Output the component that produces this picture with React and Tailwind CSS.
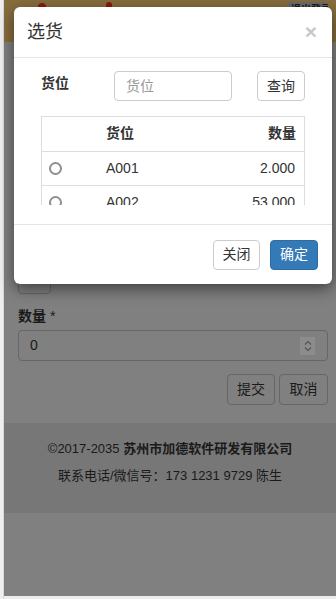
const font = { fontFamily: '"Liberation Sans", "Noto Sans CJK SC", sans-serif' }

const Radio = () => (
  <span className="block w-[13px] h-[13px] rounded-full border-2 border-[#8f8f8f] bg-white"></span>
)

const rows = [
  { loc: 'A001', qty: '2.000' },
  { loc: 'A002', qty: '53.000' },
  { loc: 'A003', qty: '8.000' },
]

const App = () => {
  return (
    <div className="relative w-[336px] h-[599px] overflow-hidden flex bg-[#ededed] text-[14px] text-[#333]" style={font}>
      {/* 左侧窗口边 */}
      <div className="w-[4px] shrink-0 bg-[#eeeeee] border-r border-[#d8d8d8]"></div>

      <div className="flex-1 flex flex-col">
        <div className="flex-1 flex flex-col bg-[#808080]">
          {/* 顶部栏 */}
          <div className="h-[42px] bg-[#876d3e] flex items-start relative">
            <span className="ml-[34px] mt-[3px] w-[8px] h-[6px] bg-[#8a1a10] rounded-t-full"></span>
            <span className="ml-[60px] mt-[2px] w-[6px] h-[7px] bg-[#8a1a10] rounded-t-full"></span>
            <span className="ml-auto mr-[8px] mt-[2px] h-[16px] w-[41px] overflow-hidden pl-[4px] rounded-[4px] bg-[#6c6c6c] text-[10px] leading-[16px] font-bold text-[#1a1a1a] whitespace-nowrap">退出登录</span>
          </div>

          <div className="pl-[14px] pr-[8px]">
            <div className="mt-[218px] w-[33px] h-[34px] rounded-[4px] border border-[#666]"></div>

            <div className="mt-[12px] font-bold leading-[20px] text-[#1a1a1a]">
              数量 <span className="font-normal">*</span>
            </div>
            <div className="mt-[4px] h-[31px] rounded-[4px] border border-[#666] flex items-center pl-[11px] pr-[12px] text-[#1a1a1a]">
              <span className="flex-1">0</span>
              <span className="w-[15px] h-[18px] bg-[#8c8c8c] flex items-center justify-center">
                <svg width="8" height="12" viewBox="0 0 8 12" fill="none" stroke="#555" strokeWidth="1.2">
                  <path d="M1 4.5 L4 1.5 L7 4.5" />
                  <path d="M1 7.5 L4 10.5 L7 7.5" />
                </svg>
              </span>
            </div>

            <div className="mt-[13px] flex justify-end gap-[4px]">
              <button className="w-[48px] h-[31px] rounded-[4px] border border-[#666] text-[#1a1a1a]">提交</button>
              <button className="w-[49px] h-[31px] rounded-[4px] border border-[#666] text-[#1a1a1a]">取消</button>
            </div>
          </div>

          {/* 页脚 */}
          <div className="mt-[18px] h-[90px] bg-[#777778] flex flex-col items-center pt-[16px] text-[13px] text-[#1a1a1a] leading-[20px]">
            <p>
              ©2017-2035 <span className="font-bold">苏州市加德软件研发有限公司</span>
            </p>
            <p className="mt-[7px]">联系电话/微信号：173 1231 9729 陈生</p>
          </div>
        </div>
        <div className="h-[3px] bg-[#ececec]"></div>
      </div>

      {/* 弹窗 */}
      <div className="absolute left-[14px] top-[7px] w-[318px] bg-white rounded-[6px] shadow-[0_5px_15px_rgba(0,0,0,0.5)]">
        <div className="h-[51px] border-b border-[#e5e5e5] flex items-center justify-between pl-[13px] pr-[15px]">
          <h4 className="text-[18px] leading-[20px] text-[#333]">选货</h4>
          <span className="text-[21px] font-bold leading-none text-[#c8c8c8] -mt-[2px]">×</span>
        </div>

        <div className="h-[166px] px-[27px] pt-[13px]">
          <div className="flex items-start">
            <label className="w-[73px] pt-[2px] font-bold leading-[20px]">货位</label>
            <input
              className="w-[118px] h-[30px] rounded-[4px] border border-[#ccc] px-[11px] placeholder:text-[#999] outline-none"
              placeholder="货位"
            />
            <button className="ml-auto w-[48px] h-[30px] rounded-[4px] border border-[#ccc] bg-white">查询</button>
          </div>

          <div className="mt-[15px] h-[89px] overflow-hidden border-x border-t border-[#ddd]">
            <table className="w-full border-collapse">
              <thead>
                <tr className="h-[34px] border-b border-[#ddd]">
                  <th className="w-[56px]"></th>
                  <th className="text-left px-[8px] font-bold">货位</th>
                  <th className="text-right px-[8px] font-bold">数量</th>
                </tr>
              </thead>
              <tbody>
                {rows.map((r) => (
                  <tr key={r.loc} className="h-[34px] border-b border-[#ddd]">
                    <td className="pl-[7px]">
                      <Radio />
                    </td>
                    <td className="px-[8px]">{r.loc}</td>
                    <td className="text-right px-[9px]">{r.qty}</td>
                  </tr>
                ))}
              </tbody>
            </table>
          </div>
        </div>

        <div className="border-t border-[#e5e5e5] h-[60px] flex items-center justify-end gap-[10px] pr-[14px]">
          <button className="w-[47px] h-[30px] rounded-[4px] border border-[#ccc] bg-white">关闭</button>
          <button className="w-[48px] h-[30px] rounded-[4px] border border-[#2e6da4] bg-[#337ab7] text-white">确定</button>
        </div>
      </div>
    </div>
  )
}

export default App
